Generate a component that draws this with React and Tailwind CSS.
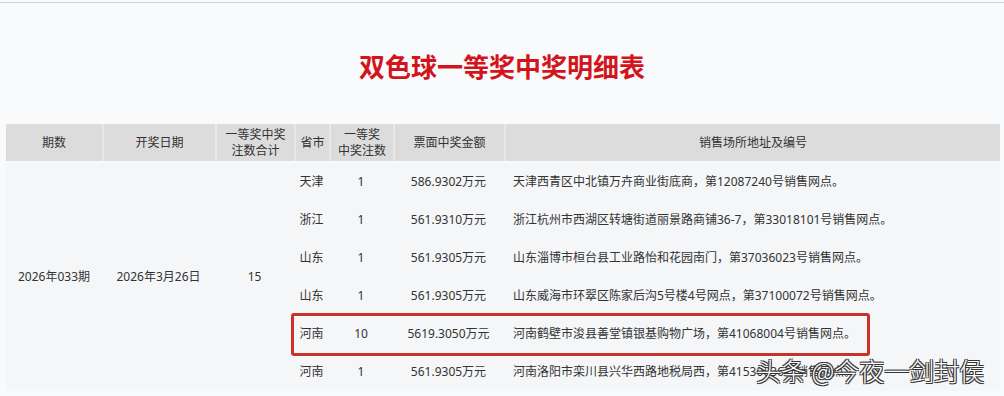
import React from 'react';

const rows = [
    { prov: '天津', count: '1', amount: '586.9302万元', addr: '天津西青区中北镇万卉商业街底商，第12087240号销售网点。' },
    { prov: '浙江', count: '1', amount: '561.9310万元', addr: '浙江杭州市西湖区转塘街道丽景路商铺36-7，第33018101号销售网点。' },
    { prov: '山东', count: '1', amount: '561.9305万元', addr: '山东淄博市桓台县工业路怡和花园南门，第37036023号销售网点。' },
    { prov: '山东', count: '1', amount: '561.9305万元', addr: '山东威海市环翠区陈家后沟5号楼4号网点，第37100072号销售网点。' },
    { prov: '河南', count: '10', amount: '5619.3050万元', addr: '河南鹤壁市浚县善堂镇银基购物广场，第41068004号销售网点。' },
    { prov: '河南', count: '1', amount: '561.9305万元', addr: '河南洛阳市栾川县兴华西路地税局西，第41530036号销售网点。' },
];

const cols = 'grid grid-cols-[96px_113px_79px_35px_64px_111px_496px]';

function HeadCell({ children, first }) {
    return (
        <div className={`flex items-center justify-center text-center leading-[16px] ${first ? '' : 'border-l-2 border-[#e8e8e8]'}`}>
            {children}
        </div>
    );
}

export default function App() {
    return (
        <div className="relative h-[396px] overflow-hidden bg-[#f9fafb] text-[12px] text-[#333] font-['Noto_Sans','Noto_Sans_CJK_SC',sans-serif]">
            {/* top rule */}
            <div className="mt-[2px] h-px bg-[#cfcfd1]" />

            {/* title */}
            <div className="pt-[45px] pb-[40px] text-center font-['Noto_Sans_CJK_SC',sans-serif]">
                <h1 className="text-[26px] leading-[36px] font-bold text-[#d2141c]">双色球一等奖中奖明细表</h1>
            </div>

            <div className="ml-[6px] w-[994px]">
                {/* header */}
                <div className={`${cols} h-[37px] bg-[#dcdcdc] text-[#333]`}>
                    <HeadCell first>期数</HeadCell>
                    <HeadCell>开奖日期</HeadCell>
                    <HeadCell>一等奖中奖<br />注数合计</HeadCell>
                    <HeadCell>省市</HeadCell>
                    <HeadCell>一等奖<br />中奖注数</HeadCell>
                    <HeadCell>票面中奖金额</HeadCell>
                    <HeadCell>销售场所地址及编号</HeadCell>
                </div>

                {/* body */}
                <div className={`relative mt-[2px] ${cols} auto-rows-[38px] bg-[#f5f6f8]`}>
                    <div className="row-span-6 flex items-center justify-center">2026年033期</div>
                    <div className="row-span-6 flex items-center justify-center">2026年3月26日</div>
                    <div className="row-span-6 flex items-center justify-center">15</div>
                    {rows.map((r, i) => (
                        <React.Fragment key={i}>
                            <div className="col-start-4 flex items-center justify-center">{r.prov}</div>
                            <div className="flex items-center justify-center">{r.count}</div>
                            <div className="flex items-center justify-center">{r.amount}</div>
                            <div className="flex items-center pl-[9px] whitespace-nowrap">{r.addr}</div>
                        </React.Fragment>
                    ))}

                    {/* highlight box */}
                    <div className="absolute left-[285px] top-[150px] h-[43px] w-[579px] rounded-[3px] border-[3px] border-[#c8322b]" />
                </div>
            </div>

            {/* watermark */}
            <div className="absolute left-[756px] top-[354px] font-['Noto_Sans_CJK_SC',sans-serif] text-[25px] leading-[32px] font-light text-white [text-shadow:1px_1px_0_#333,-1px_-1px_0_#333,1px_-1px_0_#333,-1px_1px_0_#333]">
                头条 @今夜一剑封侯
            </div>
        </div>
    );
}
